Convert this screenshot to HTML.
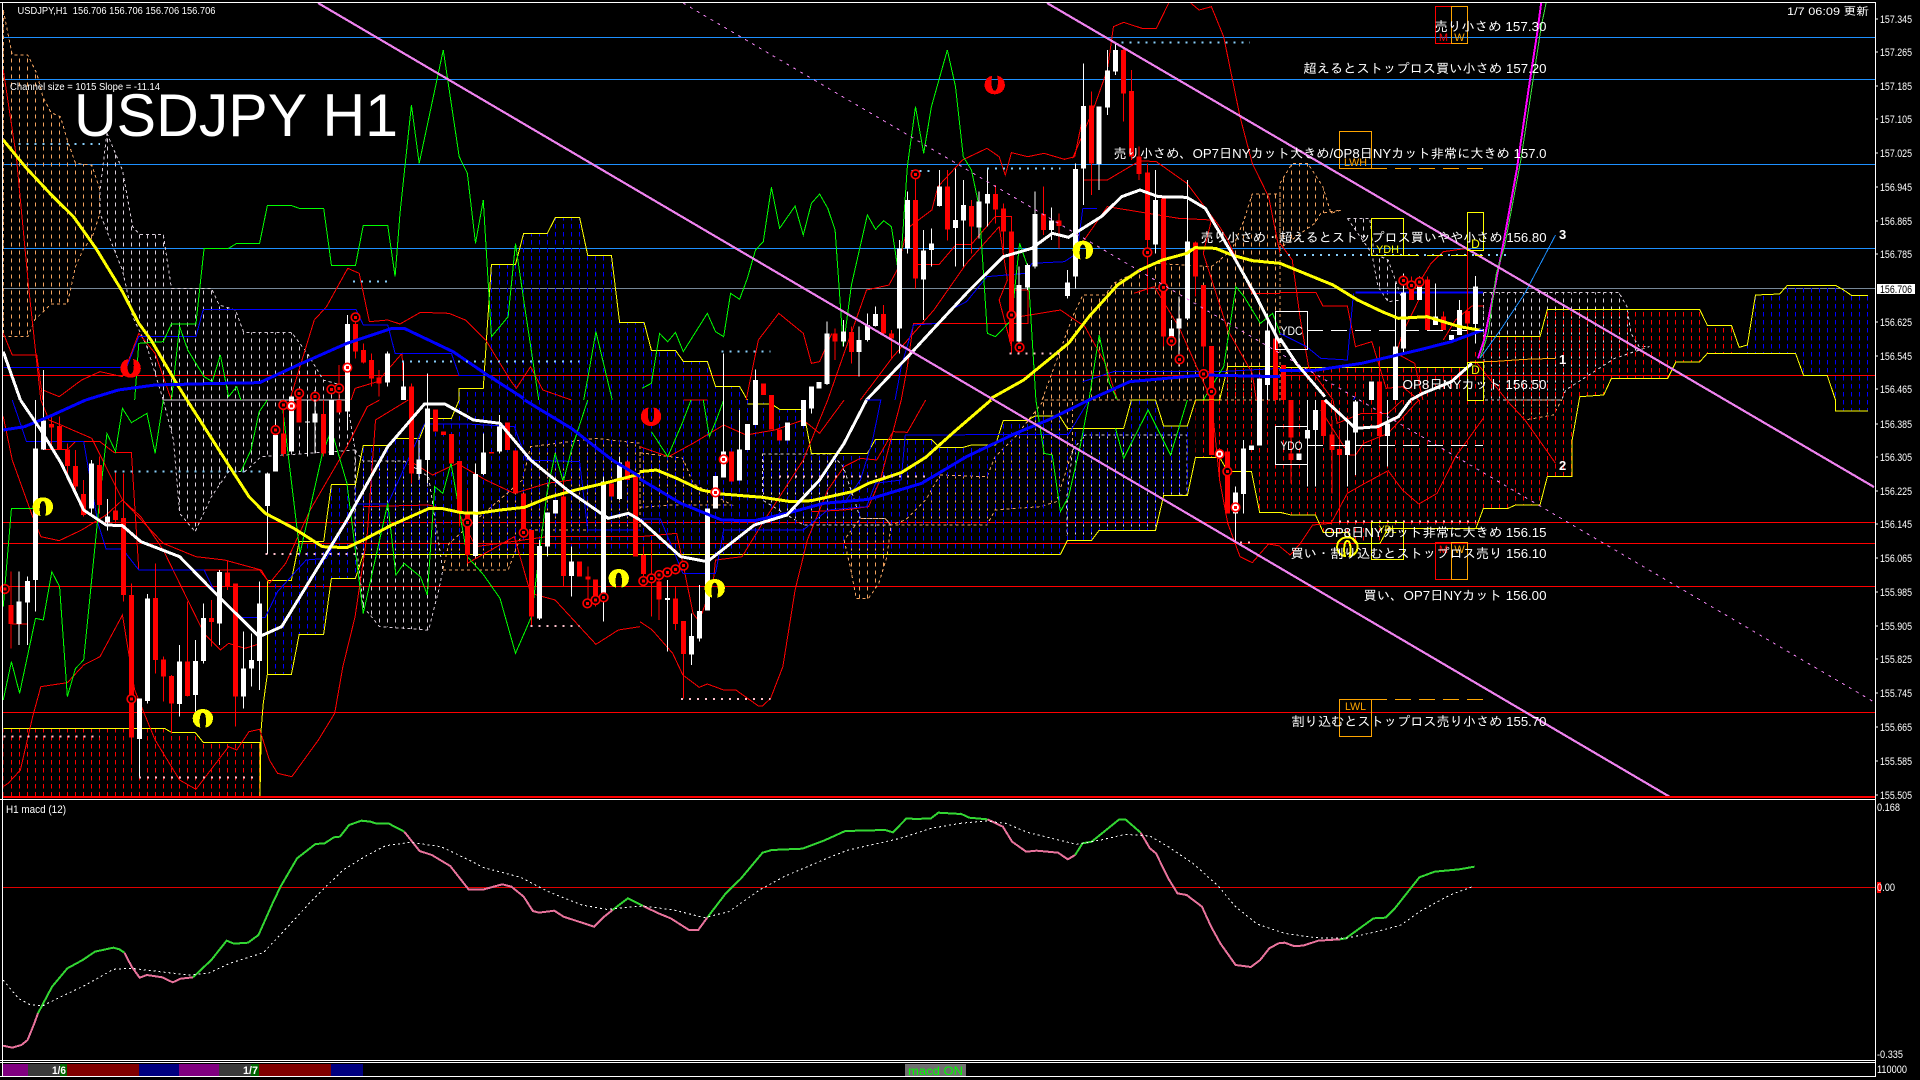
<!DOCTYPE html>
<html><head><meta charset="utf-8"><title>USDJPY H1</title>
<style>
html,body{margin:0;padding:0;background:#000;width:1920px;height:1080px;overflow:hidden}
svg{display:block;position:absolute;left:0;top:0}
svg *{vector-effect:non-scaling-stroke}
polyline,path,line,rect,polygon{shape-rendering:crispEdges}
polyline{fill:none}
text{font-family:"Liberation Sans","IPAGothic","Noto Sans CJK JP",sans-serif;fill:#fff}
.l text,.l{font-size:13px;text-anchor:end}
.ax text{font-size:11px}
.ww{stroke:#fff;stroke-width:1;fill:none}
.rw{stroke:#f00;stroke-width:1;fill:none}
.wb{stroke:#fff;stroke-width:5;fill:none}
.rb{stroke:#f00;stroke-width:5;fill:none}
.g{stroke:#0f0;stroke-width:1}
.r{stroke:#f00;stroke-width:1}
.b{stroke:#00f;stroke-width:1}
.y{stroke:#ff0;stroke-width:1}
.Y{stroke:#ff0;stroke-width:3}
.B{stroke:#00f;stroke-width:3}
.W{stroke:#fff;stroke-width:3}
.cb{fill:url(#pb);stroke:none}
.cr{fill:url(#pr);stroke:none}
.cw{fill:url(#pw);stroke:#d8ccd8;stroke-width:1;stroke-dasharray:3 3}
.co{fill:url(#po);stroke:#f4a460;stroke-width:1;stroke-dasharray:3 3}
.d1{stroke:#87cefa;stroke-width:2;stroke-dasharray:2 6;fill:none}
.d2{stroke:#ffc0cb;stroke-width:2;stroke-dasharray:2 6;fill:none}
.h{stroke-width:1}
</style></head>
<body>
<svg width="1920" height="1080" viewBox="0 0 1920 1080" xmlns="http://www.w3.org/2000/svg">
<defs>
<pattern id="pb" patternUnits="userSpaceOnUse" width="19.6" height="24"><rect x="7.6" y="0" width="2" height="14" fill="#0000ff"/></pattern>
<pattern id="pr" patternUnits="userSpaceOnUse" width="19.6" height="24"><rect x="7.6" y="0" width="2" height="14" fill="#ff0000"/></pattern>
<pattern id="pw" patternUnits="userSpaceOnUse" width="19.6" height="24"><rect x="7.6" y="8" width="2" height="12" fill="#dcd0dc"/></pattern>
<pattern id="po" patternUnits="userSpaceOnUse" width="19.6" height="24"><rect x="7.6" y="8" width="2" height="12" fill="#f4a460"/></pattern>
<path id="arch" d="M-6,28 C-18,26 -25,14 -25,0 C-25,-16 -14,-28 0,-28 C14,-28 25,-16 25,0 C25,14 18,26 6,28 C9,14 9,-17 0,-17 C-9,-17 -9,14 -6,28Z"/>
<g id="o"><ellipse cx="0" cy="0" rx="10.5" ry="13" fill="#000" stroke="#f00" stroke-width="1.6"/><rect x="-3.7" y="-4.5" width="7.4" height="9" fill="#f00"/></g>
<g id="q"><ellipse cx="0" cy="0" rx="10.5" ry="13" fill="#fff" stroke="#f00" stroke-width="1.6"/><rect x="-3.7" y="-4.5" width="7.4" height="9" fill="#f00"/></g>
</defs>
<rect width="1920" height="1080" fill="#000"/>

<!-- horizontal lines -->
<g class="h">
<line x1="3" x2="1875" y1="37.5" y2="37.5" stroke="#1e90ff"/>
<line x1="3" x2="1875" y1="79.5" y2="79.5" stroke="#1e90ff"/>
<line x1="3" x2="1875" y1="164.5" y2="164.5" stroke="#1e90ff"/>
<line x1="3" x2="1875" y1="248.5" y2="248.5" stroke="#1e90ff"/>
<line x1="3" x2="1875" y1="288.5" y2="288.5" stroke="#778899"/>
<line x1="3" x2="1875" y1="375.5" y2="375.5" stroke="#f00"/>
<line x1="3" x2="1875" y1="522.5" y2="522.5" stroke="#f00"/>
<line x1="3" x2="1875" y1="543.5" y2="543.5" stroke="#f00"/>
<line x1="3" x2="1875" y1="586.5" y2="586.5" stroke="#f00"/>
<line x1="3" x2="1875" y1="712.5" y2="712.5" stroke="#f00"/>
</g>

<!-- PANEL A -->
<g transform="translate(0,0) scale(.40816,.33333)">
<polygon class="co" points="8,30 30,165 68,165 90,220 105,290 125,338 148,350 165,420 185,490 225,495 245,570 245,640 225,715 205,745 185,800 165,912 125,912 85,960 68,1010 8,1010"/>
<polygon class="cw" points="262,400 300,510 325,680 342,703 400,703 420,865 518,865 537,915 577,930 597,997 714,997 753,1060 792,1140 850,1160 850,1200 400,1200 360,1040 325,950 300,810 280,750 245,640 245,570"/>
<polygon class="cb" points="1125,1200 1125,1165 1184,1165 1204,793 1263,793 1283,700 1341,700 1361,652 1420,652 1440,766 1498,766 1518,967 1568,967 1568,1200"/>
<polyline class="y" points="1125,1200 1125,1165 1184,1165 1204,793 1263,793 1283,700 1341,700 1361,652 1420,652 1440,766 1498,766 1518,967 1568,967"/>
<polyline class="r" points="8,210 40,470 70,860 100,1200"/>
<polyline class="r" points="8,1000 30,1065 90,1065 105,1200"/>
<polyline class="r" points="105,1170 145,1190 200,1140 245,1115 300,1130 340,1000 380,1060 420,1200"/>
<polyline class="r" points="710,1200 770,960 800,920 852,805 880,820 905,965 950,960 980,972 1030,937 1100,940 1140,960 1190,1020 1250,1140 1265,1165 1300,1100 1330,1170 1400,1200"/>
<polyline class="r" points="860,1200 870,1165 925,1145 985,1060 990,1200"/>
<polyline class="b" points="8,1103 310,1103 340,1010 480,1010 498,928 872,928 890,975 950,975 968,1060 1106,1060 1125,1127 1204,1127 1283,1200"/>
<polyline class="g" points="330,1200 340,1030 400,1025 420,972 480,972 500,745 560,745 580,730 636,730 655,617 715,617 733,625 793,625 812,796 871,796 890,676 950,676 968,830 980,640 1008,315 1027,490 1086,150 1125,470 1145,520 1165,730 1184,600 1204,1010 1245,950 1263,730 1283,900 1320,1200"/>
<polyline class="g" points="420,1200 440,980 460,1050 500,1130 520,1145 540,1065 560,1190 580,1160 590,1200"/>
<polyline class="g" points="1430,1200 1440,1135 1460,995 1500,1200"/>
<path class="ww" d="M851 945V1200M949 1055V1160M988 1085V1200M1047 1120V1200M106 1110V1200M772 1170V1200"/>
<path class="wb" d="M851 972V1200M949 1060V1148M988 1160V1200M714 1190V1200"/>
<path class="rw" d="M871 960V1075M890 1030V1090M910 1060V1160M929 1110V1190M831 1095V1200M1008 1150V1200"/>
<path class="rb" d="M871 972V1055M890 1050V1088M910 1080V1136M929 1132V1150M1008 1160V1200M733 1190V1200"/>
<polyline class="Y" points="8,420 65,505 130,590 180,650 235,745 300,875 340,970 370,1020 430,1145 458,1200"/>
<polyline class="B" points="210,1200 290,1170 380,1155 540,1150 636,1148 730,1095 850,1030 960,985 990,985 1110,1055 1200,1130 1283,1195"/>
<polyline class="W" points="8,1055 50,1200"/>
<polyline class="d1" points="45,432 245,432"/><polyline class="d1" points="865,845 950,845"/><polyline class="d1" points="985,1085 1420,1085"/>
<use href="#o" x="871" y="952"/><use href="#q" x="851" y="1103"/><use href="#o" x="733" y="1180"/><use href="#o" x="772" y="1190"/><use href="#o" x="812" y="1168"/><use href="#o" x="831" y="1165"/>
<use href="#arch" fill="#f00" transform="translate(320,1105) scale(1,-1)"/>
</g>

<!-- PANEL B -->
<g transform="translate(640,0) scale(.40816,.33333)">
<polygon class="co" points="985,1200 1060,950 1085,885 1140,885 1160,850 1260,790 1400,800 1450,750 1480,660 1500,582 1568,582 1568,1200"/>
<polygon class="cb" points="0,967 10,967 28,1051 87,1051 106,1084 165,1084 185,1159 244,1159 263,1200 0,1200"/>
<polyline class="y" points="0,967 10,967 28,1051 87,1051 106,1084 165,1084 185,1159 244,1159 263,1200"/>
<polygon class="cr" points="1420,1200 1440,1100 1568,1100 1568,1200"/>
<polyline class="y" points="1420,1200 1440,1100 1568,1100"/>
<polyline class="r" points="1060,475 1110,330 1145,210 1160,80 1185,67 1230,85 1265,85 1295,10"/>
<polyline class="r" points="1350,10 1370,30 1400,20 1430,110 1470,350 1500,490 1540,590 1568,760"/>
<polyline class="r" points="460,1200 500,1060 555,870 610,855 630,810 655,685 715,630 730,560 790,480 850,445 880,470 895,525 910,458 950,470 990,460 1040,478 1065,470 1085,350"/>
<polyline class="r" points="260,1200 290,1020 340,940 400,1000 420,1090 440,1085 470,1000"/>
<polyline class="r" points="540,1200 620,1070 720,930 800,790 880,680 900,840 880,900 910,1040"/>
<polyline class="r" points="670,793 733,793 775,733 812,733 870,650 910,650 910,870 950,870 950,970 670,970 655,1100 640,1200"/>
<polyline class="r" points="930,950 1030,930 1090,980 1140,1090 1170,1200"/>
<polyline class="r" points="1085,540 1145,540 1225,482 1265,485 1340,550 1420,680 1440,720 1500,880 1568,880"/>
<polyline class="r" points="1060,770 1145,620 1320,655 1400,660 1380,760 1440,990 1500,1120 1510,1200"/>
<polyline class="r" points="1210,880 1260,860 1320,980 1400,1200"/>
<polyline class="b" points="625,1200 640,1100 670,975 730,970"/>
<polyline class="b" points="760,930 800,905 850,830 945,820 960,790 1040,785 1070,760 1085,625 1120,625"/>
<polyline class="b" points="1085,1145 1160,1115 1420,1115 1568,1105"/>
<polyline class="g" points="5,1165 28,1150 48,1000 68,1025 87,997 106,1055 165,940 185,995 205,1010 222,880 244,898 263,835 283,750 302,725 322,562 342,685 380,618 400,705 420,610 440,582 460,625 478,690 490,900 498,1040 518,855 557,645 577,688 597,662 616,680 636,840 655,500 675,320 695,460 714,320 753,150 773,260 792,470 812,510 831,620 851,1000 871,1010 910,960 930,730 950,800 970,1200"/>
<polyline class="g" points="1100,1200 1125,1005 1150,1150 1170,1200"/>
<polyline class="g" points="1380,1200 1430,1100 1460,860 1480,890 1520,970 1550,940 1568,1000"/>
<path class="ww" d="M204 1060V1200M283 1108V1200M458 965V1155M498 960V1040M537 980V1130M557 940V1025M577 920V980M636 720V1060M655 575V760M694 690V960M714 685V800M734 510V620M773 505V800M792 540V800M831 575V715M851 505V680M929 800V1060M949 790V870M968 575V805M1008 622V720M1047 810V895M1067 490V865M1086 190V615M1125 320V570M1145 150V345M1165 130V225M1263 510V760M1302 960V1040M1321 890V1100M1341 540V960M1537 940V1200"/>
<path class="wb" d="M283 1140V1200M420 1160V1200M439 1146V1165M458 1000V1152M498 995V1025M537 1020V1056M557 975V1020M577 942V978M636 745V985M655 600V745M694 752V838M714 730V750M734 560V618M773 660V684M792 615V662M831 605V682M851 582V610M929 855V1025M949 795V862M968 642V800M1008 662V690M1047 848V888M1067 507V830M1086 318V505M1125 320V492M1145 212V323M1165 150V215M1263 600V733M1302 985V1012M1321 955V985M1341 725V955M1537 992V1155M1518 1135V1200"/>
<path class="rw" d="M478 985V1080M518 980V1090M596 915V1005M616 990V1075M675 530V865M753 510V722M812 600V760M871 555V670M890 610V750M910 670V1060M988 560V705M1027 640V745M1106 275V585M1184 140V365M1204 210V480M1223 440V540M1243 490V880M1282 600V1040M1361 725V890M1381 855V1100M1400 1038V1200"/>
<path class="rb" d="M302 1150V1185M322 1185V1200M478 1000V1025M518 996V1056M596 942V1000M616 1000V1016M675 600V835M753 560V688M812 618V680M871 582V628M890 625V695M910 695V1025M988 642V690M1027 662V678M1106 316V490M1184 150V280M1204 273V470M1223 470V522M1243 518V720M1282 595V1010M1361 727V830M1381 855V1040M1400 1038V1200M1557 1015V1200"/>
<polyline class="Y" points="860,1195 940,1140 1050,1030 1100,950 1170,855 1225,810 1280,780 1340,760 1360,743 1410,745 1450,765 1500,782 1568,790"/>
<polyline class="B" points="1100,1200 1200,1145 1380,1125 1568,1130"/>
<polyline class="W" points="555,1200 660,1065 720,985 800,880 890,770 960,745 1010,700 1050,712 1130,650 1180,590 1225,570 1270,590 1340,592 1385,625 1450,760 1510,890 1568,1030"/>
<polyline class="d1" points="1180,128 1495,128"/><polyline class="d1" points="850,505 1030,505"/><polyline class="d1" points="665,513 715,513"/><polyline class="d1" points="200,1055 320,1055"/>
<polyline class="d2" points="905,1060 1030,1060"/>
<use href="#o" x="675" y="523"/><use href="#o" x="910" y="945"/><use href="#o" x="930" y="1042"/><use href="#o" x="1243" y="757"/><use href="#o" x="1282" y="862"/><use href="#o" x="1302" y="1023"/><use href="#o" x="1322" y="1078"/><use href="#o" x="1381" y="1122"/><use href="#o" x="1400" y="1175"/>
<use href="#arch" fill="#f00" transform="translate(869,255) scale(1,-1)"/>
<use href="#arch" fill="#ff0" transform="translate(1085,750)"/>
</g>

<!-- PANEL C -->
<g transform="translate(1280,0) scale(.40816,.33333)">
<polygon class="co" points="0,550 30,490 68,490 105,560 125,640 150,630 100,640 85,670 0,745"/>
<polygon class="cw" points="165,655 220,655 230,760 265,780 300,900 265,905 240,860 225,760"/>
<polygon class="cw" points="498,877 830,877 850,920 860,1000 880,1040 905,1040 820,1075 700,1170 690,1200 500,1200" />
<polygon class="cr" points="0,1103 459,1103 498,1010 637,1010 655,928 1028,928 1047,976 1106,976 1125,1042 1125,1060 1047,1060 1028,1086 970,1086 950,1135 812,1135 793,1185 735,1190 733,1200 0,1200"/>
<polygon class="cb" points="1125,1060 1145,1035 1165,885 1224,882 1243,856 1361,856 1381,870 1400,886 1440,886 1440,1200 1361,1200 1341,1127 1283,1127 1263,1060"/>
<polyline class="y" points="498,1010 637,1010 655,928 1028,928 1047,976 1106,976 1125,1042 1145,1035 1165,885 1224,882 1243,856 1361,856 1381,870 1400,886 1440,886"/>
<polyline class="y" points="733,1200 735,1190 793,1185 812,1135 950,1135 970,1086 1028,1086 1047,1060 1263,1060 1283,1127 1341,1127 1361,1200"/>
<polyline class="y" points="0,1103 459,1103"/>
<polyline class="r" points="0,730 30,780 50,960 70,1100 130,1200"/>
<polyline class="r" points="0,877 88,877 105,918 165,918 185,1040 225,1025 260,1165 300,1160 340,1200"/>
<polyline class="r" points="340,850 370,790 400,755 459,745"/>
<polyline class="r" points="340,900 300,1000 285,1060 330,1090 350,1200"/>
<polyline class="r" points="400,1020 430,960 470,918 498,918"/>
<polyline class="b" points="0,1000 65,1040 100,1075 165,1080 180,880"/>
<polyline class="b" points="180,1200 185,1190"/>
<polyline stroke="#00f" stroke-width="2" points="185,877 497,877"/>
<path class="ww" d="M283 850V1200M303 820V1060M342 830V900M381 850V975M440 900V1005M479 828V1030M224 1145V1200"/>
<path class="wb" d="M283 1040V1200M303 878V1045M342 850V900M381 950V975M420 1005V1020M440 930V1005M479 860V972M224 1145V1200"/>
<path class="rw" d="M322 830V900M361 830V990M400 935V990M459 750V1100M244 1040V1200"/>
<path class="rb" d="M8 1095V1200M322 845V900M361 838V990M400 950V990M459 933V970M244 1145V1200"/>
<polyline class="Y" points="0,790 50,815 130,855 190,900 250,935 290,955 360,950 400,965 440,980 497,992"/>
<polyline class="B" points="0,1112 80,1112 200,1090 340,1050 420,1025 497,990"/>
<polyline class="W" points="0,1015 40,1090 110,1190"/>
<polyline class="W" points="320,1200 350,1180 420,1145 470,1090"/>
<polyline stroke="#ff00ff" stroke-width="2" points="485,1075 500,1020 520,900 545,745 580,510 610,260 630,100 640,8"/>
<polyline stroke="#3ce03c" stroke-width="1" points="490,1075 510,1000 530,820 550,740 590,480 620,240 640,80 652,8"/>
<polyline stroke="#1e90ff" stroke-width="1" points="490,1075 540,990 600,880 630,810 660,740 675,705"/>
<polyline stroke="#ffa500" stroke-width="1" points="460,1087 530,1084 600,1078 675,1075"/>
<polyline class="r" points="480,1085 555,1200"/>
<polyline class="d1" points="0,765 560,765"/>
<use href="#o" x="302" y="842"/><use href="#o" x="322" y="856"/><use href="#o" x="342" y="846"/>
</g>

<!-- PANEL D -->
<g transform="translate(0,400) scale(.40816,.33333)">
<polygon class="cw" points="400,0 850,0 870,150 640,170 600,215 560,215 518,290 478,395 440,340 425,120"/>
<polygon class="cw" points="870,150 890,183 990,183 1050,230 1085,510 1075,570 1050,690 930,680 890,620 870,400"/>
<polygon class="co" points="1085,510 1245,510 1282,390 1568,390 1568,130 1460,115 1300,140 1280,240 1100,430"/>
<polygon class="cr" points="8,985 403,985 420,997 478,997 498,1027 637,1027 637,1190 8,1190"/>
<polygon class="cb" points="645,910 655,823 714,823 733,703 793,703 812,535 871,535 890,463 1568,463 1568,0 1125,0 1106,55 1047,55 1028,115 968,115 949,136 890,136 871,253 812,253 793,425 733,425 714,541 655,541"/>
<polyline class="y" points="8,985 403,985 420,997 478,997 498,1027 637,1027 637,1190 640,985 645,910 655,823 714,823 733,703 793,703 812,535 871,535 890,463 1568,463"/>
<polyline class="y" points="655,823 655,541 714,541 733,425 793,425 812,253 871,253 890,136 949,136 968,115 1028,115 1047,55 1106,55 1125,0"/>
<polyline class="r" points="8,50 30,180 80,350 100,410 145,422 200,390 260,345 300,300 345,350 400,450 460,600 500,700 540,750 560,730 600,745 640,730"/>
<polyline class="r" points="8,1160 20,1150 50,1110 80,950 100,860 165,848 205,795 245,770 300,645 330,870 380,1020 440,1140 480,1168 560,1040 580,1050 610,995 636,988 660,1080 680,1120 715,1130 780,1020 820,940 840,800 870,650 900,400 920,60 1000,0"/>
<polyline class="r" points="100,0 120,60 140,70 225,115 300,300 400,430 480,470 550,480 640,510 660,550 700,490 760,330 850,140 900,20 930,0"/>
<polyline class="r" points="1145,490 1210,445 1260,410 1300,580 1360,600 1460,733 1515,690 1568,680"/>
<polyline class="r" points="30,672 67,672 67,670"/>
<polyline class="r" points="105,148 165,148 185,125 245,125 280,158 322,158 340,510 636,510 655,540"/>
<polyline class="r" points="890,320 1050,315 1125,340 1165,440 1225,430 1340,410 1400,410 1568,410"/>
<polyline class="r" points="1000,180 1060,225 1120,190 1190,240 1260,280 1340,250 1400,240"/>
<polyline class="b" points="30,0 65,125 205,125 240,370 260,447 300,447 340,510 500,510 530,585 590,652 650,652 680,575 750,480 800,475 870,312 950,312 1040,72 1145,72 1260,80 1290,180 1420,185 1440,390 1568,390"/>
<polyline class="g" points="8,900 28,785 48,880 87,655 106,660 127,515 146,560 165,890 185,805 205,780 244,300 262,100 283,155 300,25 322,68 360,40 380,160 400,0"/>
<polyline class="g" points="8,620 28,325 88,325"/>
<polyline class="g" points="590,215 615,150 635,35 655,0"/>
<polyline class="g" points="690,0 735,460 790,160 812,90 850,250 890,640 950,310 970,525 990,490 1030,530 1047,585 1065,260 1085,280 1105,190 1145,470 1185,525 1225,595 1263,760 1302,650 1340,280 1360,160 1380,245 1400,150 1440,0"/>
<path class="ww" d="M47 515V735M67 530V735M87 0V635M106 0V150M224 180V350M263 297V392M342 895V1135M361 582V910M440 735V950M479 720V935M498 610V790M538 510V735M597 695V925M616 700V860M636 545V870M655 218V462M675 60V215M753 0V170M772 0V160M851 0V90M1027 120V240M1047 0V250M1165 190V470M1184 100V225M1224 45V160M1322 420V660M1341 337V470M1400 440V590M1479 230V665M1518 170V300"/>
<path class="wb" d="M47 605V672M67 543V608M87 145V540M106 62V148M224 190V325M263 350V368M342 895V1017M361 595V903M440 785V912M479 783V885M498 654V783M538 516V670M597 805V890M616 780V806M636 610V783M655 220V318M675 105V215M714 0V155M753 64V68M772 40V68M812 0V165M851 0V35M1027 178V222M1047 25V180M1165 222V468M1184 157V222M1224 80V155M1322 438V655M1341 337V440M1361 300V340M1400 485V528M1479 244V582M1518 187V297"/>
<path class="rw" d="M27 515V745M126 50V140M146 50V150M165 130V240M185 150V280M205 240V350M244 170V340M283 218V370M303 220V605M322 550V1080M381 490V820M401 770V905M420 825V1000M459 605V890M518 600V740M557 485V570M577 550V980M694 0V170M792 0V170M1008 0V250M1126 183V380M1145 270V490M1302 390V680M1381 240V560M1420 485V530M1440 500V620M1459 540V620"/>
<path class="rb" d="M27 615V672M126 72V82M146 78V148M165 148V198M185 198V260M205 282V345M244 195V315M283 332V360M303 354V585M322 585V1012M381 594V780M401 778V830M420 828V910M459 785V888M518 654V666M557 518V560M577 550V890M694 100V162M733 0V68M792 42V160M831 0V38M1008 0V220M1067 28V95M1086 95V105M1106 102V190M1126 183V340M1145 340V465M1204 156V160M1243 68V150M1263 152V280M1283 280V390M1302 390V650M1381 290V528M1420 485V530M1440 530V538M1459 538V590M1498 250V290M1537 185V240M1557 223V470"/>
<polyline class="Y" points="458,0 500,80 560,195 610,290 650,340 720,385 790,440 850,443 890,420 960,375 1050,326 1085,326 1130,338 1170,340 1225,330 1285,322 1345,292 1410,270 1480,250 1568,222"/>
<polyline class="B" points="8,90 60,80 120,50 210,0"/>
<polyline class="B" points="1285,0 1400,85 1500,180 1568,230"/>
<polyline class="W" points="50,0 100,90 150,190 205,330 260,375 300,377 345,425 440,470 520,570 635,710 690,680 780,500 850,360 950,140 1040,12 1090,12 1160,60 1225,70 1300,180 1390,270 1490,355 1540,340 1568,360"/>
<polyline class="d1" points="280,215 640,215"/>
<polyline class="d2" points="650,462 890,462"/><polyline class="d2" points="340,1133 635,1133"/><polyline class="d2" points="8,1010 245,1010"/><polyline class="d2" points="1300,678 1420,678"/>
<use href="#o" x="694" y="15"/><use href="#q" x="714" y="18"/><use href="#o" x="675" y="90"/><use href="#o" x="12" y="567"/><use href="#o" x="322" y="897"/><use href="#o" x="1145" y="368"/><use href="#o" x="1283" y="398"/><use href="#o" x="1439" y="610"/><use href="#o" x="1459" y="600"/><use href="#o" x="1479" y="592"/>
<use href="#arch" fill="#ff0" transform="translate(105,320)"/>
<use href="#arch" fill="#ff0" transform="translate(497,955)"/>
<use href="#arch" fill="#ff0" transform="translate(1516,535)"/>
</g>

<!-- PANEL E -->
<g transform="translate(640,400) scale(.40816,.33333)">
<polygon class="co" points="0,158 105,175 130,250 225,315 75,315 0,322"/>
<polygon class="cw" points="300,162 470,162 498,200 540,355 600,355 615,375 400,375 300,300"/>
<polygon class="co" points="735,225 850,230 870,170 920,110 990,0 1060,0 1060,150 1020,305 980,320 870,330 850,375 615,375 650,360 700,300"/>
<polygon class="co" points="500,420 515,500 530,595 560,595 585,550 605,470 615,375 600,355 540,355"/>
<polygon class="cw" points="1060,150 1090,105 1340,105 1340,285 1283,287 1263,391 1125,391 1106,422 1047,422 1045,300"/>
<polygon class="cb" points="0,0 263,0 322,12 342,28 400,28 420,160 557,160 577,118 714,118 734,142 792,142 812,135 871,135 890,61 949,61 968,48 1028,48 1047,85 1185,85 1204,0 1263,0 1283,78 1341,78 1361,172 1341,287 1283,287 1263,391 1125,391 1106,422 1047,422 1030,463 0,463"/>
<polygon class="cr" points="1361,0 1568,0 1568,337 1518,337 1498,214 1440,214 1420,172 1361,172"/>
<polyline class="y" points="0,463 1030,463 1047,422 1106,422 1125,391 1263,391 1283,287 1341,287 1361,172 1420,172 1440,214 1498,214 1518,337 1568,337"/>
<polyline class="y" points="263,12 322,12 342,28 400,28 420,160 557,160 577,118 714,118 734,142 792,142 812,135 871,135 890,61 949,61 968,48 1028,48 1047,85 1185,85 1204,0 1263,0 1283,78 1341,78 1361,0 1420,0"/>
<polyline class="r" points="0,665 30,690 80,760 105,825 145,862 165,852 205,870 235,870 290,918 300,918 320,895 350,800 380,570 410,420 460,270 500,200 540,175 580,180 620,95 655,97 700,0"/>
<polyline class="r" points="0,140 70,170 130,130 205,75 260,105 330,90 400,60 440,100 500,0"/>
<polyline class="r" points="0,410 90,400 130,640 145,665 180,540 185,480 250,470 300,370 400,180 460,0"/>
<polyline class="r" points="106,0 165,0"/>
<polyline class="r" points="420,335 500,330 560,320 590,235 640,0"/>
<polyline class="r" points="1400,0 1420,240 1440,370 1470,470 1500,488 1540,432 1568,438"/>
<polyline class="b" points="0,357 50,357 105,520 185,520 205,390 400,390 460,330 555,320 577,250 640,240 650,105 1050,103 1100,0"/>
<polyline class="b" points="555,0 590,0 570,120 540,240 500,310"/>
<polyline class="g" points="28,95 68,170 105,65 125,0"/>
<polyline class="g" points="155,0 170,110 187,60 205,0"/>
<polyline class="g" points="970,0 990,160 1010,165 1030,335 1050,290 1080,130 1100,0"/>
<polyline class="g" points="1165,85 1185,175 1245,30 1300,165 1341,0"/>
<path class="ww" d="M204 0V155M244 30V242M420 0V40M165 325V632M146 555V725M126 640V795M67 540V755M1459 260V425M1479 120V340M1518 0V137"/>
<path class="wb" d="M204 155V232M244 148V242M263 72V150M283 0V75M361 67V122M400 0V78M420 0V25M185 228V325M165 325V632M146 633V715M126 708V763M67 594V600M1459 277V340M1479 145V282M1498 137V150M1518 0V137"/>
<path class="rw" d="M106 663V895M87 560V690M47 515V660M28 420V650M8 440V560M1420 165V235"/>
<path class="rb" d="M224 155V245M322 0V88M342 88V122M106 663V762M87 595V672M47 545V598M8 465V522M1400 0V165M1439 155V340"/>
<polyline class="Y" points="0,215 40,210 90,235 150,270 200,282 300,292 370,305 420,302 520,275 560,250 640,218 700,172 770,95 860,0"/>
<polyline class="B" points="0,237 100,310 200,360 280,362 360,340 450,310 560,298 690,250 800,170 920,100 1000,60 1100,0"/>
<polyline class="W" points="0,360 100,470 165,485 280,375 360,345 440,240 500,130 555,0"/>
<polyline class="d2" points="340,230 710,230"/><polyline class="d2" points="100,897 320,897"/><polyline class="d2" points="1470,427 1500,427"/>
<use href="#q" x="205" y="178"/><use href="#q" x="185" y="277"/><use href="#o" x="8" y="543"/><use href="#o" x="28" y="535"/><use href="#o" x="47" y="525"/><use href="#o" x="67" y="517"/><use href="#o" x="87" y="508"/><use href="#o" x="107" y="497"/><use href="#q" x="1420" y="162"/><use href="#o" x="1439" y="214"/><use href="#q" x="1459" y="322"/>
<use href="#arch" fill="#f00" transform="translate(27,50) scale(1,-1)"/>
<use href="#arch" fill="#ff0" transform="translate(183,565)"/>
</g>

<!-- PANEL F -->
<g transform="translate(1280,400) scale(.40816,.33333)">
<polygon class="co" points="555,0 600,60 670,45 690,0"/>
<polygon class="cr" points="0,0 733,0 715,125 715,230 655,230 637,315 577,315 557,326 498,326 480,385 265,385 245,430 185,430 165,397 106,397 87,345 27,345 0,337"/>
<polygon class="cb" points="1361,0 1440,0 1440,33 1361,33"/>
<polyline class="y" points="1361,0 1361,33 1440,33"/>
<polyline class="y" points="733,0 715,125 715,230 655,230 637,315 577,315 557,326 498,326 480,385 303,385 265,385 245,430 185,430 165,397 106,397 87,345 27,345 0,337"/>
<polyline class="r" points="555,0 600,60 635,120 675,190"/>
<polyline class="r" points="498,55 430,170 385,280 340,312 300,270 265,212 205,252 165,280 125,370 80,375 50,430 25,465 0,440"/>
<polyline class="r" points="130,0 140,70 200,40 265,40 300,0"/>
<polyline class="r" points="100,30 170,165 185,165 205,130 265,100 340,0"/>
<path class="ww" d="M87 0V260M165 60V260M185 0V225M263 0V200M67 0V260"/>
<path class="wb" d="M87 30V90M67 90V115M165 122V165M185 5V97M263 70V108M47 160V180"/>
<path class="rw" d="M27 0V250M127 60V280M146 90V365M244 0V150M107 0V130"/>
<path class="rb" d="M27 0V112M107 0V108M127 103V150M146 147V165M244 0V108M27 160V180"/>
<polyline class="W" points="110,0 185,85 240,80 290,50 320,0"/>
<polyline class="d2" points="145,365 480,365"/>
<use href="#arch" fill="none" stroke="#ff0" stroke-width="2" transform="translate(165,440)"/>
</g>

<!-- trend lines -->
<line x1="318" y1="3" x2="1670" y2="797" stroke="#ee82ee" stroke-width="2.2"/>
<line x1="1047" y1="3" x2="1874" y2="487" stroke="#ee82ee" stroke-width="2.2"/>
<line x1="683" y1="3" x2="1874" y2="702" stroke="#ee82ee" stroke-width="1" stroke-dasharray="3 5"/>

<!-- boxes -->
<g fill="none" stroke-width="1">
<rect x="1435.5" y="6.5" width="16" height="37" stroke="#f00"/>
<rect x="1451.5" y="6.5" width="16" height="37" stroke="#ffa500"/>
<rect x="1339.5" y="131.5" width="32" height="37" stroke="#ffa500"/>
<rect x="1371.5" y="218.5" width="32" height="37" stroke="#ff0"/>
<rect x="1467.5" y="212.5" width="16" height="38" stroke="#ff0"/>
<rect x="1467.5" y="362.5" width="16" height="38" stroke="#ff0"/>
<rect x="1275.5" y="311.5" width="32" height="38" stroke="#fff"/>
<rect x="1275.5" y="426.5" width="32" height="38" stroke="#fff"/>
<rect x="1371.5" y="522.5" width="32" height="37" stroke="#ff0"/>
<rect x="1435.5" y="542.5" width="16" height="37" stroke="#f00"/>
<rect x="1451.5" y="542.5" width="16" height="37" stroke="#ffa500"/>
<rect x="1339.5" y="699.5" width="32" height="37" stroke="#ffa500"/>
<line x1="1371" x2="1483" y1="168.5" y2="168.5" stroke="#ffa500" stroke-dasharray="16 8"/>
<line x1="1403" x2="1483" y1="255.5" y2="255.5" stroke="#ff0" stroke-dasharray="16 8"/>
<line x1="1307" x2="1483" y1="330.5" y2="330.5" stroke="#fff" stroke-dasharray="16 8"/>
<line x1="1307" x2="1483" y1="445.5" y2="445.5" stroke="#fff" stroke-dasharray="16 8"/>
<line x1="1403" x2="1483" y1="528.5" y2="528.5" stroke="#ff0" stroke-dasharray="16 8"/>
<line x1="1371" x2="1483" y1="699.5" y2="699.5" stroke="#ffa500" stroke-dasharray="16 8"/>
</g>
<g font-size="11">
<text x="1443.5" y="41" text-anchor="middle" style="fill:#f00" font-size="11">M</text>
<text x="1459.5" y="41" text-anchor="middle" style="fill:#ffa500">W</text>
<text x="1355.5" y="166" text-anchor="middle" style="fill:#ffa500" textLength="23" lengthAdjust="spacingAndGlyphs">LWH</text>
<text x="1387.5" y="253" text-anchor="middle" style="fill:#ff0" textLength="23" lengthAdjust="spacingAndGlyphs">YDH</text>
<text x="1475.5" y="248" text-anchor="middle" style="fill:#ff0" font-size="12">D</text>
<text x="1475.5" y="374" text-anchor="middle" style="fill:#ff0" font-size="12">D</text>
<text x="1291.5" y="335" text-anchor="middle" textLength="22" lengthAdjust="spacingAndGlyphs" font-size="12">YDC</text>
<text x="1291.5" y="450" text-anchor="middle" textLength="22" lengthAdjust="spacingAndGlyphs" font-size="12">YDO</text>
<text x="1387.5" y="533" text-anchor="middle" style="fill:#ff0" textLength="18" lengthAdjust="spacingAndGlyphs">YDL</text>
<text x="1443.5" y="553" text-anchor="middle" style="fill:#f00">M</text>
<text x="1459.5" y="553" text-anchor="middle" style="fill:#ffa500">W</text>
<text x="1355.5" y="710" text-anchor="middle" style="fill:#ffa500" textLength="21" lengthAdjust="spacingAndGlyphs">LWL</text>
</g>

<!-- labels -->
<g class="l">
<text x="1546.5" y="31" textLength="112" lengthAdjust="spacingAndGlyphs">売り小さめ 157.30</text>
<text x="1546.5" y="73" textLength="243" lengthAdjust="spacingAndGlyphs">超えるとストップロス買い小さめ 157.20</text>
<text x="1546.5" y="158" textLength="433" lengthAdjust="spacingAndGlyphs">売り小さめ、OP7日NYカット大きめ/OP8日NYカット非常に大きめ 157.0</text>
<text x="1546.5" y="242" textLength="346" lengthAdjust="spacingAndGlyphs">売り小さめ・超えるとストップロス買いやや小さめ 156.80</text>
<text x="1546.5" y="389" textLength="144" lengthAdjust="spacingAndGlyphs">OP8日NYカット 156.50</text>
<text x="1546.5" y="537" textLength="222" lengthAdjust="spacingAndGlyphs">OP8日NYカット非常に大きめ 156.15</text>
<text x="1546.5" y="558" textLength="256" lengthAdjust="spacingAndGlyphs">買い・割り込むとストップロス売り 156.10</text>
<text x="1546.5" y="600" textLength="183" lengthAdjust="spacingAndGlyphs">買い、OP7日NYカット 156.00</text>
<text x="1546.5" y="726" textLength="255" lengthAdjust="spacingAndGlyphs">割り込むとストップロス売り小さめ 155.70</text>
</g>
<text x="1559" y="239" font-size="13" font-weight="bold">3</text>
<text x="1559" y="364" font-size="13" font-weight="bold">1</text>
<text x="1559" y="470" font-size="13" font-weight="bold">2</text>

<text x="17.5" y="14" font-size="10" textLength="198" lengthAdjust="spacingAndGlyphs" xml:space="preserve">USDJPY,H1  156.706 156.706 156.706 156.706</text>
<text x="10" y="90" font-size="10" textLength="150" lengthAdjust="spacingAndGlyphs">Channel size = 1015 Slope = -11.14</text>
<text x="74" y="136" font-size="60" textLength="324" lengthAdjust="spacingAndGlyphs">USDJPY H1</text>
<text x="1787" y="15" font-size="11" textLength="82" lengthAdjust="spacingAndGlyphs">1/7 06:09 更新</text>

<!-- MACD -->
<g transform="translate(0,780) scale(.6125,.33333)">
<line x1="5" x2="1568" y1="323" y2="323" stroke="#e00000"/>
<polyline stroke="#e8739c" stroke-width="2" points="5,797 20,803 35,795 45,780 55,735 62,700"/>
<polyline stroke="#33d633" stroke-width="2" points="62,700 85,620 110,565 135,540 155,515 185,503 195,508 203,518"/>
<polyline stroke="#e8739c" stroke-width="2" points="203,518 215,560 228,593 240,585 265,592 282,607 295,596 315,592"/>
<polyline stroke="#33d633" stroke-width="2" points="315,592 345,540 370,482 382,491 405,488 422,465 445,370 458,320 485,235 515,192 530,190 545,172 555,170 570,135 590,122 605,125 615,131 635,131 660,155"/>
<polyline stroke="#e8739c" stroke-width="2" points="660,155 685,213 705,225 735,258 765,328 790,328 820,313 835,320 855,350 870,393 880,398 905,392 920,410 970,440 985,412 1000,390"/>
<polyline stroke="#33d633" stroke-width="2" points="1000,390 1025,355 1050,378"/>
<polyline stroke="#e8739c" stroke-width="2" points="1050,378 1075,400 1095,415 1125,450 1140,450 1155,412"/>
<polyline stroke="#33d633" stroke-width="2" points="1155,412 1185,340 1210,295 1245,218 1260,210 1310,206 1345,182 1380,153 1445,150 1458,157 1480,115 1495,117 1520,115 1532,98 1568,102"/>
<polyline stroke="#fff" stroke-width="1" stroke-dasharray="2 3" points="5,600 30,655 50,675 70,677 100,650 140,615 185,568 215,565 260,575 310,585 340,580 375,550 430,518 470,440 510,360 560,270 600,225 630,197 670,187 720,200 760,235 790,263 850,292 895,335 950,375 990,388 1050,378 1100,390 1150,413 1190,395 1240,330 1280,290 1350,235 1385,210 1470,175 1520,145 1568,130"/>
</g>
<g transform="translate(960,780) scale(.6125,.33333)">
<line x1="0" x2="1494" y1="323" y2="323" stroke="#e00000"/>
<polyline stroke="#33d633" stroke-width="2" points="0,100 15,113 45,118"/>
<polyline stroke="#e8739c" stroke-width="2" points="45,118 70,140 85,185 108,215 125,212 160,218 176,238 188,225"/>
<polyline stroke="#33d633" stroke-width="2" points="188,225 200,190 215,185 260,118 270,118 295,158"/>
<polyline stroke="#e8739c" stroke-width="2" points="295,158 310,205 320,220 340,295 355,340 370,345 395,380 410,440 425,490 450,555 475,561 490,540 505,505 520,490 530,488 545,498 560,497 585,482 620,478"/>
<polyline stroke="#33d633" stroke-width="2" points="620,478 630,475 675,415 695,413 710,385 750,292 775,275 815,268 840,260"/>
<polyline stroke="#fff" stroke-width="1" stroke-dasharray="2 3" points="0,130 40,123 75,130 110,157 190,193 230,180 270,163 310,168 340,200 380,250 420,315 450,380 485,432 530,460 580,473 630,475 680,455 720,435 750,395 800,345 840,318"/>
</g>

<!-- frames -->
<line x1="0" x2="1875" y1="2.5" y2="2.5" stroke="#fff"/>
<line x1="2.5" x2="2.5" y1="2" y2="1077" stroke="#fff"/>
<line x1="1875.5" x2="1875.5" y1="2" y2="1077" stroke="#fff"/>
<line x1="3" x2="1875" y1="797.5" y2="797.5" stroke="#f00" stroke-width="1"/>
<line x1="3" x2="1875" y1="796.5" y2="796.5" stroke="#f00" stroke-width="1"/>
<line x1="0" x2="1875" y1="799.5" y2="799.5" stroke="#fff"/>
<line x1="0" x2="1875" y1="1060.5" y2="1060.5" stroke="#fff"/>
<line x1="0" x2="1875" y1="1062.5" y2="1062.5" stroke="#fff"/>
<line x1="0" x2="1875" y1="1076.5" y2="1076.5" stroke="#fff"/>

<!-- bottom strip -->
<rect x="3" y="1064" width="25" height="12" fill="#800080"/>
<rect x="28" y="1064" width="32" height="12" fill="#3a3a3a"/>
<rect x="60" y="1064" width="7" height="12" fill="#006400"/>
<rect x="67" y="1064" width="72" height="12" fill="#800000"/>
<rect x="139" y="1064" width="40" height="12" fill="#000080"/>
<rect x="179" y="1064" width="40" height="12" fill="#800080"/>
<rect x="219" y="1064" width="32" height="12" fill="#3a3a3a"/>
<rect x="251" y="1064" width="8" height="12" fill="#006400"/>
<rect x="259" y="1064" width="72" height="12" fill="#800000"/>
<rect x="331" y="1064" width="32" height="12" fill="#000080"/>
<text x="52" y="1074" font-size="11" font-weight="bold" textLength="14" lengthAdjust="spacingAndGlyphs">1/6</text>
<text x="243" y="1074" font-size="11" font-weight="bold" textLength="15" lengthAdjust="spacingAndGlyphs">1/7</text>
<rect x="905" y="1064" width="61" height="12" fill="#707070"/>
<text x="908" y="1075" font-size="12" style="fill:#0f0" textLength="55" lengthAdjust="spacingAndGlyphs">macd ON</text>

<!-- axis -->
<g stroke="#fff">
<path d="M1875 19h3M1875 52h3M1875 86h3M1875 119h3M1875 153h3M1875 187h3M1875 221h3M1875 254h3M1875 322h3M1875 356h3M1875 389h3M1875 424h3M1875 457h3M1875 491h3M1875 524h3M1875 558h3M1875 592h3M1875 626h3M1875 659h3M1875 693h3M1875 727h3M1875 761h3M1875 795h3"/>
</g>
<g class="ax">
<text x="1880" y="23" textLength="32" lengthAdjust="spacingAndGlyphs">157.345</text>
<text x="1880" y="56" textLength="32" lengthAdjust="spacingAndGlyphs">157.265</text>
<text x="1880" y="90" textLength="32" lengthAdjust="spacingAndGlyphs">157.185</text>
<text x="1880" y="123" textLength="32" lengthAdjust="spacingAndGlyphs">157.105</text>
<text x="1880" y="157" textLength="32" lengthAdjust="spacingAndGlyphs">157.025</text>
<text x="1880" y="191" textLength="32" lengthAdjust="spacingAndGlyphs">156.945</text>
<text x="1880" y="225" textLength="32" lengthAdjust="spacingAndGlyphs">156.865</text>
<text x="1880" y="258" textLength="32" lengthAdjust="spacingAndGlyphs">156.785</text>
<text x="1880" y="326" textLength="32" lengthAdjust="spacingAndGlyphs">156.625</text>
<text x="1880" y="360" textLength="32" lengthAdjust="spacingAndGlyphs">156.545</text>
<text x="1880" y="393" textLength="32" lengthAdjust="spacingAndGlyphs">156.465</text>
<text x="1880" y="428" textLength="32" lengthAdjust="spacingAndGlyphs">156.385</text>
<text x="1880" y="461" textLength="32" lengthAdjust="spacingAndGlyphs">156.305</text>
<text x="1880" y="495" textLength="32" lengthAdjust="spacingAndGlyphs">156.225</text>
<text x="1880" y="528" textLength="32" lengthAdjust="spacingAndGlyphs">156.145</text>
<text x="1880" y="562" textLength="32" lengthAdjust="spacingAndGlyphs">156.065</text>
<text x="1880" y="596" textLength="32" lengthAdjust="spacingAndGlyphs">155.985</text>
<text x="1880" y="630" textLength="32" lengthAdjust="spacingAndGlyphs">155.905</text>
<text x="1880" y="663" textLength="32" lengthAdjust="spacingAndGlyphs">155.825</text>
<text x="1880" y="697" textLength="32" lengthAdjust="spacingAndGlyphs">155.745</text>
<text x="1880" y="731" textLength="32" lengthAdjust="spacingAndGlyphs">155.665</text>
<text x="1880" y="765" textLength="32" lengthAdjust="spacingAndGlyphs">155.585</text>
<text x="1880" y="799" textLength="32" lengthAdjust="spacingAndGlyphs">155.505</text>
</g>
<rect x="1877" y="284" width="38" height="10" fill="#fff"/>
<text x="1880" y="293" font-size="11" style="fill:#000" textLength="32" lengthAdjust="spacingAndGlyphs">156.706</text>
<rect x="1877" y="882" width="4" height="11" fill="#f00"/>
<g class="ax">
<text x="1877" y="811" textLength="23" lengthAdjust="spacingAndGlyphs">0.168</text>
<text x="1877" y="891" textLength="18" lengthAdjust="spacingAndGlyphs">0.00</text>
<text x="1877" y="1058" textLength="26" lengthAdjust="spacingAndGlyphs">-0.335</text>
<text x="1877" y="1073" textLength="30" lengthAdjust="spacingAndGlyphs">110000</text>
</g>
<text x="6" y="813" font-size="11" textLength="60" lengthAdjust="spacingAndGlyphs">H1  macd (12)</text>
</svg>
</body></html>
